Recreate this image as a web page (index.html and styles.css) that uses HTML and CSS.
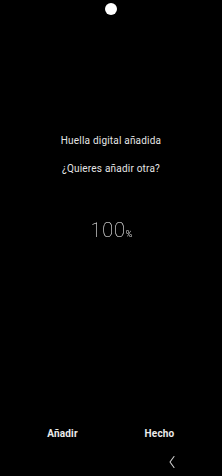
FILE: index.html
```html
<!DOCTYPE html>
<html lang="es">
<head>
<meta charset="utf-8">
<link rel="stylesheet" href="styles.css">
</head>
<body>
<div class="screen">
  <div class="cutout"><span class="camera"></span></div>
  <div class="message">
    <p class="line">Huella digital añadida</p>
    <p class="line second">¿Quieres añadir otra?</p>
  </div>
  <div class="progress"><span class="value">100</span><span class="pct">%</span></div>
  <div class="actions">
    <button class="action">Añadir</button>
    <button class="action">Hecho</button>
  </div>
  <div class="navbar">
    <svg class="back" width="6" height="14" viewBox="0 0 6 14"><path d="M5 1.5 L1 7 L5 12.5" fill="none" stroke="#cfcfcf" stroke-width="1.1" stroke-linecap="round" stroke-linejoin="round"/></svg>
  </div>
</div>
</body>
</html>
```
FILE: styles.css
```css
html, body {
  margin: 0;
  padding: 0;
  background: #000;
}
.screen {
  width: 222px;
  height: 476px;
  display: flex;
  flex-direction: column;
  font-family: Roboto, "Liberation Sans", sans-serif;
  color: #e4e4e4;
}
.cutout {
  display: flex;
  justify-content: center;
  padding-top: 3px;
  height: 12px;
}
.camera {
  width: 12px;
  height: 12px;
  border-radius: 50%;
  background: #fff;
}
.message {
  margin-top: 120px;
  text-align: center;
}
.line {
  margin: 0;
  font-size: 10px;
  line-height: 12px;
  letter-spacing: 0.2px;
}
.second {
  margin-top: 16px;
}
.progress {
  margin-top: 43px;
  text-align: center;
  line-height: 24px;
  height: 24px;
  padding-left: 1px;
  color: #ffffff;
  will-change: transform;
}
.value {
  font-size: 20px;
  font-weight: 100;
  letter-spacing: 0.8px;
}
.pct {
  font-size: 9px;
  font-weight: 300;
  margin-left: 0;
}
.actions {
  margin-top: auto;
  display: flex;
  padding: 0 14px;
}
.action {
  flex: 1;
  background: none;
  border: 0;
  padding: 0;
  font-family: inherit;
  font-size: 10px;
  font-weight: 700;
  line-height: 12px;
  letter-spacing: 0.2px;
  color: #ececec;
}
.navbar {
  height: 36px;
  box-sizing: border-box;
  padding: 8px 47px 0 0;
  display: flex;
  justify-content: flex-end;
  align-items: center;
}
.back {
  display: block;
}
```
